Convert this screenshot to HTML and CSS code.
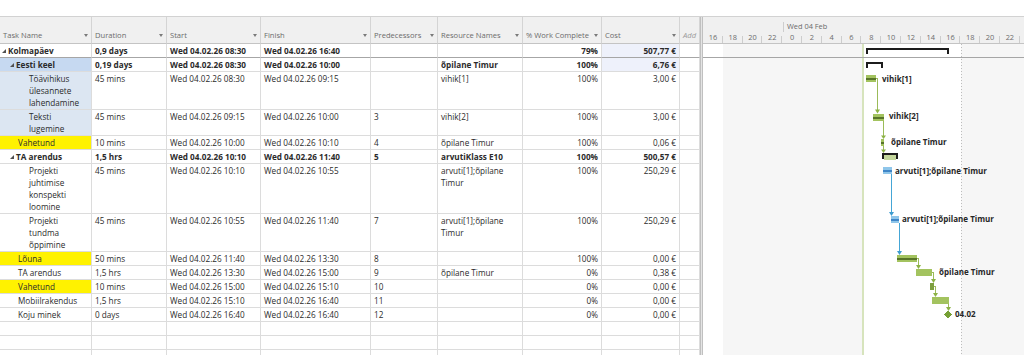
FILE: index.html
```html
<!DOCTYPE html>
<html lang="et">
<head>
    <meta charset="UTF-8">
    <meta name="viewport" content="width=device-width, initial-scale=1.0">
    <title>Kolmapäev - Gantt</title>
    <link rel="stylesheet" href="styles.css">
</head>
<body>
    <div class="topgap"></div>

    <div class="view">
        <div class="sheet">
            <div class="row head">
                <div class="hc"><span>Task Name</span><i class="dd"></i></div>
                <div class="hc"><span>Duration</span><i class="dd"></i></div>
                <div class="hc"><span>Start</span><i class="dd"></i></div>
                <div class="hc"><span>Finish</span><i class="dd"></i></div>
                <div class="hc"><span>Predecessors</span><i class="dd"></i></div>
                <div class="hc"><span>Resource Names</span><i class="dd"></i></div>
                <div class="hc"><span>% Work Complete</span><i class="dd"></i></div>
                <div class="hc"><span>Cost</span><i class="dd"></i></div>
                <div class="hc add"><span>Add</span></div>
            </div>

            <div class="row first b">
                <div class="c l1"><i class="tog"></i>Kolmapäev</div>
                <div class="c">0,9 days</div>
                <div class="c">Wed 04.02.26 08:30</div>
                <div class="c">Wed 04.02.26 16:40</div>
                <div class="c"></div>
                <div class="c"></div>
                <div class="c r">79%</div>
                <div class="c r lav">507,77 €</div>
                <div class="c"></div>
            </div>

            <div class="row b">
                <div class="c l2s sel"><i class="tog"></i>Eesti keel</div>
                <div class="c">0,19 days</div>
                <div class="c">Wed 04.02.26 08:30</div>
                <div class="c">Wed 04.02.26 10:00</div>
                <div class="c"></div>
                <div class="c">õpilane Timur</div>
                <div class="c r">100%</div>
                <div class="c r lav">6,76 €</div>
                <div class="c"></div>
            </div>

            <div class="row">
                <div class="c l3 pale">Töävihikus<br>ülesannete<br>lahendamine</div>
                <div class="c">45 mins</div>
                <div class="c">Wed 04.02.26 08:30</div>
                <div class="c">Wed 04.02.26 09:15</div>
                <div class="c"></div>
                <div class="c">vihik[1]</div>
                <div class="c r">100%</div>
                <div class="c r">3,00 €</div>
                <div class="c"></div>
            </div>

            <div class="row">
                <div class="c l3 pale">Teksti<br>lugemine</div>
                <div class="c">45 mins</div>
                <div class="c">Wed 04.02.26 09:15</div>
                <div class="c">Wed 04.02.26 10:00</div>
                <div class="c">3</div>
                <div class="c">vihik[2]</div>
                <div class="c r">100%</div>
                <div class="c r">3,00 €</div>
                <div class="c"></div>
            </div>

            <div class="row">
                <div class="c l2 hl">Vahetund</div>
                <div class="c">10 mins</div>
                <div class="c">Wed 04.02.26 10:00</div>
                <div class="c">Wed 04.02.26 10:10</div>
                <div class="c">4</div>
                <div class="c">õpilane Timur</div>
                <div class="c r">100%</div>
                <div class="c r">0,06 €</div>
                <div class="c"></div>
            </div>

            <div class="row b">
                <div class="c l2s"><i class="tog"></i>TA arendus</div>
                <div class="c">1,5 hrs</div>
                <div class="c">Wed 04.02.26 10:10</div>
                <div class="c">Wed 04.02.26 11:40</div>
                <div class="c">5</div>
                <div class="c">arvutiKlass E10</div>
                <div class="c r">100%</div>
                <div class="c r">500,57 €</div>
                <div class="c"></div>
            </div>

            <div class="row">
                <div class="c l3">Projekti<br>juhtimise<br>konspekti<br>loomine</div>
                <div class="c">45 mins</div>
                <div class="c">Wed 04.02.26 10:10</div>
                <div class="c">Wed 04.02.26 10:55</div>
                <div class="c"></div>
                <div class="c">arvuti[1];õpilane<br>Timur</div>
                <div class="c r">100%</div>
                <div class="c r">250,29 €</div>
                <div class="c"></div>
            </div>

            <div class="row">
                <div class="c l3">Projekti<br>tundma<br>õppimine</div>
                <div class="c">45 mins</div>
                <div class="c">Wed 04.02.26 10:55</div>
                <div class="c">Wed 04.02.26 11:40</div>
                <div class="c">7</div>
                <div class="c">arvuti[1];õpilane<br>Timur</div>
                <div class="c r">100%</div>
                <div class="c r">250,29 €</div>
                <div class="c"></div>
            </div>

            <div class="row">
                <div class="c l2 hl">Lõuna</div>
                <div class="c">50 mins</div>
                <div class="c">Wed 04.02.26 11:40</div>
                <div class="c">Wed 04.02.26 13:30</div>
                <div class="c">8</div>
                <div class="c"></div>
                <div class="c r">100%</div>
                <div class="c r">0,00 €</div>
                <div class="c"></div>
            </div>

            <div class="row">
                <div class="c l2">TA arendus</div>
                <div class="c">1,5 hrs</div>
                <div class="c">Wed 04.02.26 13:30</div>
                <div class="c">Wed 04.02.26 15:00</div>
                <div class="c">9</div>
                <div class="c">õpilane Timur</div>
                <div class="c r">0%</div>
                <div class="c r">0,38 €</div>
                <div class="c"></div>
            </div>

            <div class="row">
                <div class="c l2 hl">Vahetund</div>
                <div class="c">10 mins</div>
                <div class="c">Wed 04.02.26 15:00</div>
                <div class="c">Wed 04.02.26 15:10</div>
                <div class="c">10</div>
                <div class="c"></div>
                <div class="c r">0%</div>
                <div class="c r">0,00 €</div>
                <div class="c"></div>
            </div>

            <div class="row">
                <div class="c l2">Mobiilrakendus</div>
                <div class="c">1,5 hrs</div>
                <div class="c">Wed 04.02.26 15:10</div>
                <div class="c">Wed 04.02.26 16:40</div>
                <div class="c">11</div>
                <div class="c"></div>
                <div class="c r">0%</div>
                <div class="c r">0,00 €</div>
                <div class="c"></div>
            </div>

            <div class="row">
                <div class="c l2">Koju minek</div>
                <div class="c">0 days</div>
                <div class="c">Wed 04.02.26 16:40</div>
                <div class="c">Wed 04.02.26 16:40</div>
                <div class="c">12</div>
                <div class="c"></div>
                <div class="c r">0%</div>
                <div class="c r">0,00 €</div>
                <div class="c"></div>
            </div>

            <div class="row">
                <div class="c"></div><div class="c"></div><div class="c"></div>
                <div class="c"></div><div class="c"></div><div class="c"></div>
                <div class="c"></div><div class="c"></div><div class="c"></div>
            </div>
            <div class="row">
                <div class="c"></div><div class="c"></div><div class="c"></div>
                <div class="c"></div><div class="c"></div><div class="c"></div>
                <div class="c"></div><div class="c"></div><div class="c"></div>
            </div>
            <div class="row">
                <div class="c"></div><div class="c"></div><div class="c"></div>
                <div class="c"></div><div class="c"></div><div class="c"></div>
                <div class="c"></div><div class="c"></div><div class="c"></div>
            </div>
        </div>

        <div class="split"></div>

        <div class="chart">
            <div class="scale">
                <div class="tier1">
                    <div class="pad"></div>
                    <div class="day">Wed 04 Feb</div>
                </div>
                <div class="tier2">
                    <span>16</span><span>18</span><span>20</span><span>22</span>
                    <span>0</span><span>2</span><span>4</span><span>6</span>
                    <span>8</span><span>10</span><span>12</span><span>14</span>
                    <span>16</span><span>18</span><span>20</span><span>22</span>
                </div>
            </div>

            <!-- bars are drawn at their time positions, in page coordinates -->
            <svg class="plot" width="321" height="311" viewBox="703 44 321 311">
                <line x1="703" y1="57.5" x2="1024" y2="57.5" stroke="#a6a6a6"/>
                <line x1="961.5" y1="44" x2="961.5" y2="355" stroke="#bdbdbd" stroke-dasharray="1 2"/>

                <!-- summaries -->
                <path d="M866 48H949V54H947V50H868V54H866Z" fill="#1c1c1c"/>
                <path d="M866 62H883V68H881V64H868V68H866Z" fill="#1c1c1c"/>
                <rect x="884" y="155" width="12" height="5" fill="#c3d69b"/>
                <path d="M882 153H898V159H896V155H884V159H882Z" fill="#1c1c1c"/>

                <!-- links -->
                <g class="lk">
                    <path d="M876 78.5H877.5V110"/>
                    <path d="M883.5 121V136"/>
                    <path d="M883.5 146V150"/>
                    <path d="M917 258.5H918.5V265"/>
                    <path d="M932 272.5H933.5V279"/>
                    <path d="M934 286.5H935.5V293"/>
                    <path d="M948.5 304V307.5"/>
                </g>
                <g class="ah">
                    <polygon points="875,109.5 880,109.5 877.5,113.5"/>
                    <polygon points="881,135.5 886,135.5 883.5,139"/>
                    <polygon points="881,149.5 886,149.5 883.5,153"/>
                    <polygon points="916,265 921,265 918.5,269"/>
                    <polygon points="931,279 936,279 933.5,283"/>
                    <polygon points="933,293 938,293 935.5,297"/>
                    <polygon points="946,307 951,307 948.5,311"/>
                </g>
                <g class="lk blue">
                    <path d="M891.5 174V212"/>
                    <path d="M899.5 223V251"/>
                </g>
                <g class="ah blue">
                    <polygon points="889,212 894,212 891.5,216"/>
                    <polygon points="897,251 902,251 899.5,255"/>
                </g>

                <!-- tasks -->
                <g class="bar">
                    <rect x="866" y="75" width="10" height="7"/>
                    <rect x="873" y="114" width="11" height="7"/>
                    <rect x="881" y="139" width="3" height="7"/>
                    <rect x="897" y="255" width="20" height="7"/>
                    <rect x="916" y="269" width="16" height="7"/>
                    <rect x="932" y="297" width="17" height="7"/>
                </g>
                <rect x="930" y="283" width="4" height="7" fill="#7d9f3f"/>
                <g class="done">
                    <rect x="866" y="77.5" width="10" height="2"/>
                    <rect x="873" y="116.5" width="11" height="2"/>
                    <rect x="881" y="141.5" width="3" height="2"/>
                    <rect x="897" y="257.5" width="20" height="2"/>
                </g>
                <g class="bar blue">
                    <rect x="883" y="167" width="9" height="7"/>
                    <rect x="891" y="216" width="8" height="7"/>
                </g>
                <g class="done blue">
                    <rect x="883" y="169.5" width="9" height="2"/>
                    <rect x="891" y="218.5" width="8" height="2"/>
                </g>
                <polygon points="947.5,310.5 951.5,314.5 947.5,318.5 943.5,314.5" fill="#76a035"/>

                <!-- labels -->
                <text class="lbl" x="882" y="82">vihik[1]</text>
                <text class="lbl" x="889" y="119">vihik[2]</text>
                <text class="lbl" x="891" y="145">õpilane Timur</text>
                <text class="lbl" x="895" y="173.5">arvuti[1];õpilane Timur</text>
                <text class="lbl" x="902" y="222">arvuti[1];õpilane Timur</text>
                <text class="lbl" x="939" y="275">õpilane Timur</text>
                <text class="lbl" x="955" y="316.5">04.02</text>
            </svg>
        </div>
    </div>
</body>
</html>
```

FILE: styles.css
```css
html, body {
    margin: 0;
    height: 355px;
    overflow: hidden;
    background-color: #fff;
}

body {
    font-family: "Open Sans", "Noto Sans", sans-serif;
    font-size: 8.2px;
    color: #2b2b2b;
}

.topgap {
    height: 16px;
    border-bottom: 1px solid #d2d2d2;
}

.view {
    display: flex;
}

/* sheet */
.sheet {
    width: 700px;
    flex: none;
}

.row {
    display: grid;
    grid-template-columns: 92px 75px 94px 110px 67px 85px 79px 78px 20px;
}

.hc {
    height: 27px;
    box-sizing: border-box;
    display: flex;
    align-items: flex-end;
    justify-content: space-between;
    padding: 0 3px 2px;
    background-color: #f0f0f0;
    border-right: 1px solid #d4d4d4;
    border-bottom: 1px solid #c4c4c4;
    color: #6b6b6b;
    font-size: 7.6px;
    line-height: 12px;
    white-space: nowrap;
    overflow: hidden;
}

.dd {
    flex: none;
    width: 0;
    height: 0;
    margin-bottom: 4px;
    border-left: 2.5px solid transparent;
    border-right: 2.5px solid transparent;
    border-top: 3px solid #7a7a7a;
}

.add {
    font-style: italic;
    color: #9a9a9a;
}

.c {
    min-height: 14px;
    box-sizing: border-box;
    padding: 1px 3px 0;
    line-height: 12px;
    border-right: 1px solid #dcdcdc;
    border-bottom: 1px solid #dcdcdc;
    white-space: nowrap;
    overflow: hidden;
}

.first .c {
    border-bottom-color: #a6a6a6;
}

.b {
    font-weight: 700;
}

.r {
    text-align: right;
}

.lav {
    background-color: #eef1fb;
}

.sel {
    background-color: #c6d9f1;
}

.pale {
    background-color: #dce6f2;
}

.hl {
    background-color: #fff200;
}

.l1 { padding-left: 2px; }
.l2s { padding-left: 10px; }
.l2 { padding-left: 18px; }
.l3 { padding-left: 29px; }

.tog {
    display: inline-block;
    width: 0;
    height: 0;
    margin-right: 2px;
    vertical-align: 1px;
    border-right: 4px solid #505050;
    border-top: 4px solid transparent;
}

.split {
    width: 1px;
    flex: none;
    background-color: #e4e4e4;
    border-left: 1px solid #c0c0c0;
    border-right: 1px solid #c0c0c0;
}

/* chart */
.chart {
    flex: 1;
    overflow: hidden;
}

.scale {
    height: 27px;
    box-sizing: border-box;
    background-color: #f0f0f0;
    border-bottom: 1px solid #c4c4c4;
    color: #6b6b6b;
    font-size: 7.4px;
}

.tier1 {
    display: flex;
    height: 15px;
}

.tier1 .pad {
    width: 80px;
}

.tier1 .day {
    flex: 1;
    padding: 3px 0 0 4px;
    line-height: 12px;
    background: linear-gradient(#cdcdcd, #cdcdcd) left bottom / 1px 10px no-repeat;
}

.tier2 {
    display: grid;
    grid-template-columns: repeat(16, 19.8px);
    height: 11px;
    line-height: 11px;
}

.tier2 span {
    text-align: center;
    background: linear-gradient(#cdcdcd, #cdcdcd) right bottom / 1px 7px no-repeat;
}

.plot {
    display: block;
    background: linear-gradient(to right,
        #fff 0 20px,
        #f6f6f6 20px 159px,
        #d7e4bd 159px 161px,
        #fff 161px 258px,
        #f6f6f6 258px);
    shape-rendering: crispEdges;
}

.lk path {
    fill: none;
    stroke: #9bbb59;
    stroke-width: 1;
}

.lk.blue path {
    stroke: #45a6d6;
}

.ah polygon {
    fill: #8cb245;
    shape-rendering: geometricPrecision;
}

.ah.blue polygon {
    fill: #3d9ccf;
}

.bar rect {
    fill: #a3c35f;
}

.bar.blue rect {
    fill: #8fc6ea;
}

.done rect {
    fill: #587429;
}

.done.blue rect {
    fill: #3f86c8;
}

.lbl {
    font-family: "Open Sans", "Noto Sans", sans-serif;
    font-size: 8px;
    font-weight: 700;
    fill: #262626;
}
```
